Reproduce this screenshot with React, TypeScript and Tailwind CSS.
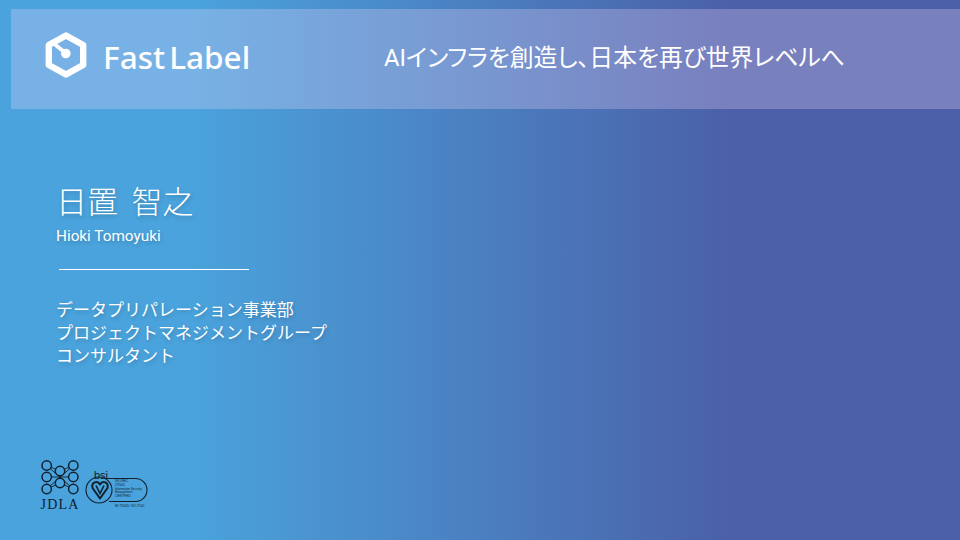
const cjk = "font-['Roboto','Noto_Sans_CJK_JP',sans-serif]";

function HexLogo() {
  return (
    <svg width="42" height="46" viewBox="0 0 42 46" fill="none" className="mb-[8px] shrink-0">
      <path
        d="M21 3.5 L38.2 13 V33 L21 42.5 L3.8 33 V13 Z"
        stroke="white"
        strokeWidth="6.4"
        strokeLinejoin="round"
      />
      <path d="M7 10 L21 21.5" stroke="white" strokeWidth="3.8" strokeLinecap="round" />
      <circle cx="20.8" cy="21.5" r="4.8" fill="white" />
    </svg>
  );
}

function JdlaLogo() {
  const nodes = [
    [5.7, 5.5],
    [32.3, 5.5],
    [19, 11],
    [5.7, 17],
    [32.3, 17],
    [19, 23],
    [5.7, 29],
    [32.3, 29],
  ];
  return (
    <div className="flex w-[38px] flex-col items-center">
      <svg width="38" height="35" viewBox="0 0 38 35" fill="none" stroke="#10202c" strokeWidth="1.5">
        <path d="M5.7 5.5 L32.3 29 M32.3 5.5 L5.7 29 M5.7 17 H32.3 M5.7 5.5 L19 11 L32.3 5.5 M5.7 29 L19 23 L32.3 29 M19 11 V23" strokeWidth="0.9" />
        {nodes.map(([cx, cy]) => (
          <circle key={`${cx}-${cy}`} cx={cx} cy={cy} r="4.7" fill="#4aa3dc" />
        ))}
      </svg>
      <span className="mt-[2px] font-['Liberation_Serif',serif] text-[14px] leading-[15px] tracking-[1.2px] text-[#10202c]">
        JDLA
      </span>
    </div>
  );
}

function BsiLogo() {
  return (
    <svg width="63" height="40" viewBox="0 0 63 40" fill="none" stroke="#10202c" strokeWidth="1.1" className="mb-[3px]">
      <circle cx="14" cy="21" r="13" />
      <path d="M20 9.5 H50.5 A11.5 11.5 0 0 1 50.5 32.5 H24" />
      <path d="M15 29.5 L7.5 19 C6 13 12.5 11 15 15.5 C17.5 11 24 13 22.5 19 Z" strokeWidth="2" strokeLinejoin="round" />
      <path d="M11 16.5 L15 24.5 L19 16.5" strokeWidth="1.6" />
      <text x="9" y="9.5" fontSize="11" fill="#10202c" stroke="none" fontFamily="Liberation Sans, sans-serif">
        bsi
      </text>
      <g fill="#10202c" stroke="none" fontFamily="Liberation Sans, sans-serif" fontSize="3.6">
        <text x="30" y="13">ISO/IEC</text>
        <text x="30" y="17">27001</text>
        <text x="30" y="20.5" fontSize="3">Information Security</text>
        <text x="30" y="24" fontSize="3">Management</text>
        <text x="30" y="28" fontSize="3">CERTIFIED</text>
        <text x="30" y="38" fontSize="2.8">BS 755605 / ISO 27001</text>
      </g>
    </svg>
  );
}

export default function App() {
  return (
    <div className={`flex h-[540px] w-[960px] flex-col overflow-hidden bg-[linear-gradient(90deg,#4aa3dc_0%,#4aa3dc_20%,#4b60a8_76%,#4b60a8_100%)] pt-[9px] pl-[11px] text-white ${cjk}`}>
      <header className="flex h-[100px] items-center bg-[#ffdcff]/[0.26] pl-[34px]">
        <HexLogo />
        <span className="ml-[16px] w-[281px] pb-[5px] font-['Noto_Sans',sans-serif] text-[31.5px] leading-none font-medium [word-spacing:-4px]">
          Fast Label
        </span>
        <h1 className="text-[23.8px] leading-none font-normal [font-feature-settings:'palt']">AIインフラを創造し、日本を再び世界レベルへ</h1>
      </header>

      <main className="flex flex-1 flex-col pl-[45px] [text-shadow:1px_2px_4px_rgba(0,0,0,0.2)]">
        <p className="mt-[75px] text-[31px] leading-[38px] font-light [word-spacing:6px]">日置 智之</p>
        <p className="mt-[4px] text-[15.3px] leading-[20px]">Hioki Tomoyuki</p>
        <div className="mt-[23px] ml-[3px] h-px w-[190px] bg-white" />
        <div className="mt-[29px] text-[17px] leading-[23px]">
          <p>データプリパレーション事業部</p>
          <p>プロジェクトマネジメントグループ</p>
          <p>コンサルタント</p>
        </div>
      </main>

      <footer className="mb-[28px] ml-[30px] flex items-end gap-[6px]">
        <JdlaLogo />
        <BsiLogo />
      </footer>
    </div>
  );
}
